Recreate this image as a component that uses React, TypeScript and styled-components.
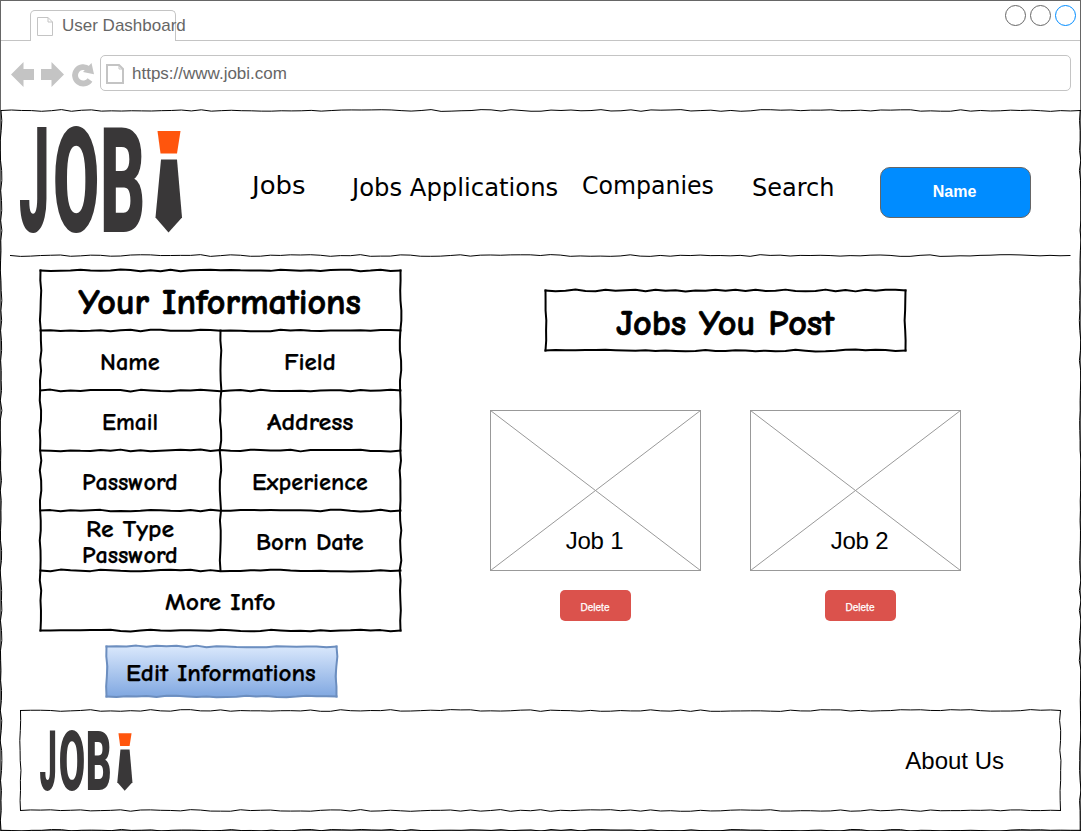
import React, { useLayoutEffect, useRef, useState } from "react";
import styled, { createGlobalStyle } from "styled-components";

const GlobalStyle = createGlobalStyle`
  * { box-sizing: border-box; }
  body { margin: 0; overflow: hidden; background: #fff; color: #000; font-family: "Liberation Sans", Arial, sans-serif; }
`;

const comic = `"Comic Sans MS", "Comic Neue", "Lato", sans-serif`;

/* ---------- hand-drawn lines ---------- */

type Point = [number, number];

function wobble(from: Point, to: Point, seed: number): string {
  let s = seed * 7919 + 17;
  const next = () => {
    s = (s * 16807) % 2147483647;
    return s / 2147483647;
  };
  next();
  next();
  const dx = to[0] - from[0];
  const dy = to[1] - from[1];
  const length = Math.hypot(dx, dy);
  const steps = Math.max(1, Math.round(length / 10));
  const points: string[] = [];
  for (let i = 0; i <= steps; i++) {
    const off = i === 0 || i === steps ? 0 : (next() - 0.5) * 1.8;
    const x = from[0] + (dx * i) / steps - (dy / length) * off;
    const y = from[1] + (dy * i) / steps + (dx / length) * off;
    points.push(`${x.toFixed(2)},${y.toFixed(2)}`);
  }
  return "M" + points.join("L");
}

const Overlay = styled.svg`
  position: absolute;
  top: 0;
  left: 0;
  overflow: visible;
  pointer-events: none;
`;

interface SketchProps {
  width: number;
  height: number;
  lines: [number, number, number, number][];
  weight?: number;
  color?: string;
  seed?: number;
}

function Sketch({ width, height, lines, weight = 1, color = "#000", seed = 1 }: SketchProps) {
  const nudge = weight === 2 ? 0.5 : 0;
  return (
    <Overlay width={width} height={height} fill="none" stroke={color} strokeWidth={weight} strokeLinejoin="round">
      <g transform={`translate(${nudge} ${nudge})`}>
        {lines.map(([x1, y1, x2, y2], i) => (
          <path key={i} d={wobble([x1, y1], [x2, y2], seed * 31 + i)} strokeLinecap="square" />
        ))}
      </g>
    </Overlay>
  );
}

function frame(w: number, h: number, inset: number): [number, number, number, number][] {
  return [
    [inset, inset, w - inset, inset],
    [w - inset, inset, w - inset, h - inset],
    [w - inset, h - inset, inset, h - inset],
    [inset, h - inset, inset, inset],
  ];
}

/* ---------- text fitted to a set width ---------- */

const FitBox = styled.span<{ $width: number }>`
  display: block;
  width: ${(p) => p.$width}px;
  text-align: left;
  white-space: nowrap;
`;

const FitInner = styled.span`
  display: inline-block;
  transform-origin: 0 50%;
`;

function Fit({ width, children }: { width: number; children: string }) {
  const ref = useRef<HTMLSpanElement>(null);
  const [scale, setScale] = useState(1);
  useLayoutEffect(() => {
    if (ref.current && ref.current.offsetWidth) setScale(width / ref.current.offsetWidth);
  }, [width, children]);
  return (
    <FitBox $width={width}>
      <FitInner ref={ref} style={{ transform: `scaleX(${scale})` }}>{children}</FitInner>
    </FitBox>
  );
}

/* ---------- browser chrome ---------- */

const Window = styled.div`
  width: 1081px;
  height: 831px;
  border: 1px solid #666;
  display: flex;
  flex-direction: column;
`;

const TabStrip = styled.div`
  display: flex;
  height: 40px;
  flex: none;
`;

const StripLine = styled.div<{ $width?: number }>`
  ${(p) => (p.$width ? `width: ${p.$width}px;` : "flex: 1;")}
  border-bottom: 1px solid #c4c4c4;
  display: flex;
  justify-content: flex-end;
  gap: 4px;
  padding: 4px 4px 0 0;
`;

const Tab = styled.div`
  width: 146px;
  height: 31px;
  margin-top: 9px;
  border: 1px solid #c4c4c4;
  border-bottom: 0;
  border-radius: 5px 5px 0 0;
  display: flex;
  padding: 6px 0 0 6px;
  gap: 9px;
  color: #666;
  font-size: 17px;
  line-height: 18px;
  white-space: nowrap;
`;

const WindowDot = styled.i<{ $color: string }>`
  width: 21px;
  height: 21px;
  border: 1px solid ${(p) => p.$color};
  border-radius: 50%;
`;

const Toolbar = styled.div`
  display: flex;
  height: 70px;
  flex: none;
  padding: 14px 9px 0 10px;
`;

const NavIcons = styled.svg`
  width: 85px;
  height: 36px;
  margin-right: 4px;
  fill: #c4c4c4;
`;

const AddressBar = styled.div`
  flex: 1;
  height: 36px;
  border: 1px solid #c4c4c4;
  border-radius: 5px;
  display: flex;
  align-items: center;
  padding: 1px 0 0 5px;
  gap: 8px;
  color: #666;
  font-size: 17px;
`;

const PageGlyph = styled.svg`
  flex: none;
  fill: none;
  stroke: #c4c4c4;
`;

function PageIcon({ w, h, weight }: { w: number; h: number; weight: number }) {
  const a = weight / 2;
  const fold = 5;
  return (
    <PageGlyph width={w} height={h} strokeWidth={weight}>
      <path d={`M${a} ${a}H${w - fold}L${w - a} ${fold}V${h - a}H${a}Z`} />
      <path d={`M${w - fold} ${a}V${fold}H${w - a}`} strokeWidth="1" />
    </PageGlyph>
  );
}

/* ---------- page ---------- */

const Page = styled.main`
  position: relative;
  height: 720px;
  flex: none;
  display: flex;
  flex-direction: column;
`;

const Header = styled.header`
  position: relative;
  height: 144px;
  margin: 0 10px 0 9px;
  padding: 16px 0 0 10px;
  display: flex;
  align-items: flex-start;
`;

const Nav = styled.nav`
  display: flex;
  margin: 44px 0 0 69px;
  font-family: Verdana, "DejaVu Sans", sans-serif;
  font-size: 24px;
  line-height: 30px;
`;

const NavItem = styled.a<{ $gap: number; $drop?: number }>`
  margin-right: ${(p) => p.$gap}px;
  padding-top: ${(p) => p.$drop ?? 0}px;
`;

const UserButton = styled.button`
  width: 151px;
  height: 51px;
  margin-top: 40px;
  border: 1px solid #666;
  border-radius: 10px;
  background: #008cff;
  color: #fff;
  font: bold 16px "Liberation Sans", Arial, sans-serif;
  padding: 0 2px 2px 0;
`;

const Content = styled.div`
  display: flex;
  height: 455px;
  padding: 14px 0 0 38px;
`;

const InfoColumn = styled.section`
  width: 362px;
  display: flex;
  flex-direction: column;
`;

const InfoTable = styled.div`
  position: relative;
  width: 362px;
  height: 362px;
  padding: 1px;
  display: grid;
  grid-template-columns: 180px 180px;
  grid-template-rows: repeat(6, 60px);
  font: 700 24px/26px ${comic};
  -webkit-text-stroke: 0.25px #000;
`;

const Cell = styled.div<{ $wide?: boolean }>`
  grid-column: span ${(p) => (p.$wide ? 2 : 1)};
  display: flex;
  flex-direction: column;
  align-items: center;
  justify-content: center;
  padding: 3px 1px 0 0;
`;

const Title = styled.h2`
  margin: 0;
  padding-top: 3px;
  font: 700 36px/40px ${comic};
  -webkit-text-stroke: 0.7px #000;
`;

const EditButton = styled.button`
  position: relative;
  width: 232px;
  height: 52px;
  margin: 14px 0 0 66px;
  padding: 4px 0 0;
  border: 0;
  background: linear-gradient(#dae8fc, #7ea6e0) 1px 1px no-repeat;
  color: #000;
  font: 700 24px/26px ${comic};
  -webkit-text-stroke: 0.25px #000;
  display: flex;
  align-items: center;
  justify-content: center;
`;

const JobsColumn = styled.section`
  margin-left: 89px;
  padding-top: 20px;
`;

const TitleBox = styled.div`
  position: relative;
  width: 362px;
  height: 62px;
  margin-left: 54px;
  padding-top: 4px;
  display: flex;
  align-items: center;
  justify-content: center;
`;

const JobList = styled.div`
  display: flex;
  gap: 49px;
  margin-top: 59px;
`;

const Job = styled.article`
  width: 211px;
  display: flex;
  flex-direction: column;
  align-items: center;
`;

const Picture = styled.div`
  position: relative;
  width: 211px;
  height: 161px;
  border: 1px solid #999;
  display: flex;
  align-items: flex-end;
  justify-content: center;
  padding: 0 2px 15px 0;
`;

const JobName = styled.span<{ $shift: number }>`
  font-size: 24px;
  line-height: 28px;
  letter-spacing: -0.2px;
  padding-left: ${(p) => p.$shift}px;
`;

const DeleteButton = styled.button<{ $shift: number }>`
  width: 71px;
  height: 31px;
  margin: 19px 0 0 ${(p) => p.$shift}px;
  padding: 4px 1px 0 0;
  border: 0;
  border-radius: 5px;
  background: #db524c;
  color: #fff;
  font: 10px "Liberation Sans", Arial, sans-serif;
  -webkit-text-stroke: 0.25px #fff;
`;

const Footer = styled.footer`
  position: relative;
  width: 1041px;
  height: 101px;
  margin-left: 19px;
  padding: 0 57px 0 20px;
  display: flex;
  align-items: center;
  justify-content: space-between;
  font-size: 24px;
`;

const LogoSvg = styled.svg`
  display: block;
  overflow: visible;
  font: 900 146px Roboto, sans-serif;
  fill: #393738;
`;

function Logo({ width, height }: { width: number; height: number }) {
  return (
    <LogoSvg width={width} height={height} viewBox="0 0 163 106" preserveAspectRatio="none">
      <text transform="translate(-1 104.5) scale(.37 1)">J</text>
      <text transform="translate(33 104.5) scale(.46 1)">O</text>
      <text transform="translate(80 104.5) scale(.48 1)">B</text>
      <path fill="#ff550d" d="M137.5 4H160.5L157 26.5H140.5Z" />
      <path d="M141 32.5H157L162 90.5L148.5 105.5L135.5 90.5Z" />
    </LogoSvg>
  );
}

function JobCard({ name, shift }: { name: string; shift: number }) {
  return (
    <Job>
      <Picture>
        <Overlay width="209" height="159" stroke="#999" strokeWidth="1">
          <path d="M-.5-.5L209.5 159.5M209.5-.5L-.5 159.5" />
        </Overlay>
        <JobName $shift={shift}>{name}</JobName>
      </Picture>
      <DeleteButton $shift={shift}>Delete</DeleteButton>
    </Job>
  );
}

export default function App() {
  return (
    <>
      <GlobalStyle />
      <Window>
        <TabStrip>
          <StripLine $width={29} />
          <Tab>
            <PageIcon w={16} h={19} weight={1} />
            <span>User Dashboard</span>
          </Tab>
          <StripLine>
            <WindowDot $color="#666" />
            <WindowDot $color="#666" />
            <WindowDot $color="#008cff" />
          </StripLine>
        </TabStrip>
        <Toolbar>
          <NavIcons viewBox="11 55 85 36">
            <path d="M11 74.5L23.5 62V69H34V80H23.5V87Z" />
            <path d="M64 74.5L51.5 62V69H41V80H51.5V87Z" />
            <path d="M90 80A8.2 8.2 0 1 1 88.5 69" fill="none" stroke="#c4c4c4" strokeWidth="5.8" />
            <path d="M91.5 63L94 74.3L83 72Z" />
          </NavIcons>
          <AddressBar>
            <PageIcon w={18} h={20} weight={2} />
            <span>https://www.jobi.com</span>
          </AddressBar>
        </Toolbar>
        <Page>
          <Sketch width={1080} height={720} seed={3} lines={[[0.5, -0.5, 1079.5, -0.5], [1079.2, -0.5, 1079.2, 719.5], [1079.5, 719.3, 0.5, 719.3], [0, 719.5, 0, -0.5]]} />
          <Header>
            <Logo width={163} height={106} />
            <Nav>
              <NavItem $gap={46}><Fit width={54}>Jobs</Fit></NavItem>
              <NavItem $gap={23.5} $drop={2}><Fit width={206.5}>Jobs Applications</Fit></NavItem>
              <NavItem $gap={38}><Fit width={132}>Companies</Fit></NavItem>
              <NavItem $gap={46} $drop={2}><Fit width={82}>Search</Fit></NavItem>
            </Nav>
            <UserButton>Name</UserButton>
            <Sketch width={1061} height={145} seed={9} lines={[[0.5, 144.5, 1060, 144.5]]} />
          </Header>
          <Content>
            <InfoColumn>
              <InfoTable>
                <Sketch
                  width={362}
                  height={362}
                  weight={2}
                  seed={5}
                  lines={[
                    ...frame(362, 362, 1),
                    [1, 61, 361, 61],
                    [1, 121, 361, 121],
                    [1, 181, 361, 181],
                    [1, 241, 361, 241],
                    [1, 301, 361, 301],
                    [181, 61, 181, 301],
                  ]}
                />
                <Cell $wide><Title><Fit width={282}>Your Informations</Fit></Title></Cell>
                <Cell><Fit width={60}>Name</Fit></Cell>
                <Cell><Fit width={52}>Field</Fit></Cell>
                <Cell><Fit width={56}>Email</Fit></Cell>
                <Cell><Fit width={86}>Address</Fit></Cell>
                <Cell><Fit width={96}>Password</Fit></Cell>
                <Cell><Fit width={116}>Experience</Fit></Cell>
                <Cell>
                  <Fit width={88}>Re Type</Fit>
                  <Fit width={96}>Password</Fit>
                </Cell>
                <Cell><Fit width={108}>Born Date</Fit></Cell>
                <Cell $wide><Fit width={110}>More Info</Fit></Cell>
              </InfoTable>
              <EditButton>
                <Sketch width={232} height={52} weight={2} color="#6c8ebf" seed={12} lines={frame(232, 52, 1)} />
                <Fit width={190}>Edit Informations</Fit>
              </EditButton>
            </InfoColumn>
            <JobsColumn>
              <TitleBox>
                <Sketch width={362} height={62} weight={2} seed={14} lines={frame(362, 62, 1)} />
                <Title><Fit width={218}>Jobs You Post</Fit></Title>
              </TitleBox>
              <JobList>
                <JobCard name="Job 1" shift={0} />
                <JobCard name="Job 2" shift={10} />
              </JobList>
            </JobsColumn>
          </Content>
          <Footer>
            <Sketch width={1041} height={101} seed={17} lines={frame(1041, 101, 0.5)} />
            <Logo width={93} height={60} />
            <span>About Us</span>
          </Footer>
        </Page>
      </Window>
    </>
  );
}
